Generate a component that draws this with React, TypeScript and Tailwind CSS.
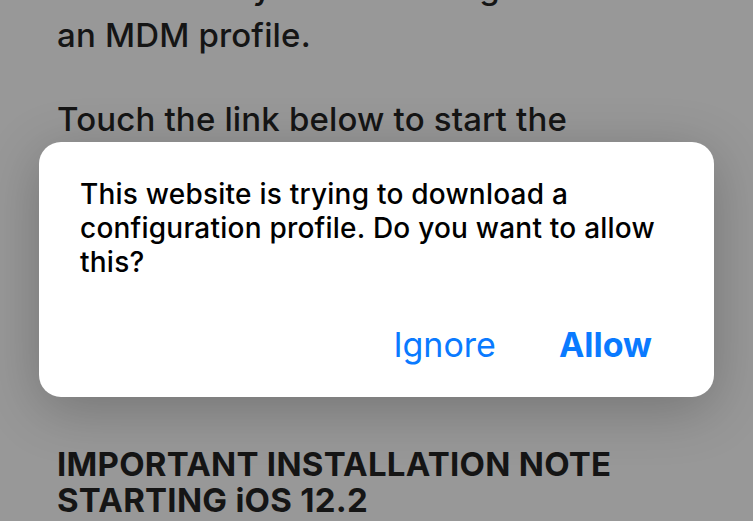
export default function App() {
  const bodyFont = { fontFamily: "Inter, 'Noto Sans', sans-serif" };

  return (
    <div
      className="relative h-[521px] w-[753px] overflow-hidden bg-[#989898] text-[#151515]"
      style={bodyFont}
    >
      {/* page behind the alert, dimmed */}
      <div className="flex flex-col px-[57px] text-[33px] font-medium tracking-[0.005em]">
        <p className="-mt-[37px] leading-[48px]">
          Enroll Mac by now installing
          <br />
          an MDM profile.
        </p>
        <p className="mt-[36px] leading-[48px]">
          Touch the link below to start the
          <br />
          enrollment process. You will be
          <br />
          asked to install a profile.
        </p>
        <p className="mt-[36px] leading-[48px]">Enroll this device</p>
        <h2 className="mt-[123px] text-[33px] font-bold leading-[36px] tracking-[0.008em]">
          IMPORTANT INSTALLATION NOTE
          <br />
          STARTING iOS 12.2
        </h2>
      </div>

      {/* alert */}
      <div className="absolute left-[39px] top-[142px] flex h-[255px] w-[675px] flex-col rounded-[22px] bg-white pl-[41px] pr-[62px] pt-[35px] shadow-[0_12px_56px_rgba(0,0,0,0.24)]">
        <p className="whitespace-nowrap text-[28px] font-medium leading-[34px] tracking-[0.008em] text-black">
          This website is trying to download a
          <br />
          configuration profile. Do you want to allow
          <br />
          this?
        </p>
        <div className="mt-auto mb-[32px] flex justify-end gap-[63px] text-[34px] leading-[40px] text-[#0a7aff]">
          <button className="font-normal">Ignore</button>
          <button className="font-bold">Allow</button>
        </div>
      </div>
    </div>
  );
}
